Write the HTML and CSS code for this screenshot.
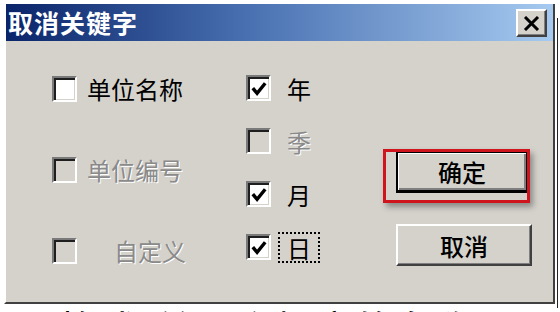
FILE: index.html
```html
<!DOCTYPE html>
<html lang="zh-CN">
<head>
<meta charset="utf-8">
<title>取消关键字</title>
<link rel="stylesheet" href="styles.css">
</head>
<body>
<div class="screen">
  <div class="dialog">
    <div class="titlebar">
      <span class="title">取消关键字</span>
      <span class="close">
        <svg width="17" height="15" viewBox="0 0 17 15"><path d="M2 1 L15 14 M15 1 L2 14" stroke="#000" stroke-width="3" fill="none"/></svg>
      </span>
    </div>
    <div class="content">
      <div class="col col1">
        <div class="opt"><span class="cb white"></span><span class="lbl">单位名称</span></div>
        <div class="opt disabled"><span class="cb"></span><span class="lbl">单位编号</span></div>
        <div class="opt disabled"><span class="cb"></span><span class="lbl indent">自定义</span></div>
      </div>
      <div class="col col2">
        <div class="opt"><span class="cb white"><svg width="21" height="22" viewBox="0 0 21 22"><path d="M4 10 L8.5 15.5 L17 5" stroke="#000" stroke-width="3.6" fill="none"/></svg></span><span class="lbl2">年</span></div>
        <div class="opt disabled"><span class="cb"></span><span class="lbl2">季</span></div>
        <div class="opt"><span class="cb white"><svg width="21" height="22" viewBox="0 0 21 22"><path d="M4 10 L8.5 15.5 L17 5" stroke="#000" stroke-width="3.6" fill="none"/></svg></span><span class="lbl2">月</span></div>
        <div class="opt"><span class="cb white"><svg width="21" height="22" viewBox="0 0 21 22"><path d="M4 10 L8.5 15.5 L17 5" stroke="#000" stroke-width="3.6" fill="none"/></svg></span><span class="lbl2 focus">日</span></div>
      </div>
      <div class="col col3">
        <div class="okwrap">
          <div class="btn default">确定</div>
          <div class="mark"></div>
        </div>
        <div class="btn">取消</div>
      </div>
    </div>
  </div>
  <div class="ruler"></div>
</div>
<div class="below">格式/单一个相应的名称</div>
</body>
</html>
```

FILE: styles.css
```css
html, body {
  margin: 0;
  padding: 0;
  background: #fff;
  width: 560px;
  height: 312px;
  overflow: hidden;
  font-family: "Noto Sans CJK SC", "Noto Sans", sans-serif;
}

.screen {
  display: flex;
  padding: 4px 0 0 4px;
}

.dialog {
  width: 551px;
  height: 300px;
  box-sizing: border-box;
  background: #d5d2cc;
  border-left: 2px solid #fff;
  border-right: 2px solid #404040;
  border-bottom: 2px solid #404040;
  display: flex;
  flex-direction: column;
}

.titlebar {
  height: 37px;
  flex: none;
  display: flex;
  align-items: center;
  justify-content: space-between;
  background: linear-gradient(to right, #0a246a 0%, #4a72b2 45%, #a6caf0 100%);
  padding: 0 6px 0 2px;
}

.title {
  color: #fff;
  font-size: 25px;
  font-weight: 700;
  letter-spacing: 1px;
  line-height: 37px;
}

.close {
  width: 31px;
  height: 28px;
  box-sizing: border-box;
  background: #d5d2cc;
  border-top: 2px solid #fff;
  border-left: 2px solid #fff;
  border-right: 2px solid #404040;
  border-bottom: 2px solid #404040;
  box-shadow: inset -1px -1px 0 #808080;
  display: flex;
  align-items: center;
  justify-content: center;
  margin-top: 1px;
}

.content {
  flex: 1;
  display: grid;
  grid-template-columns: 240px 150px auto;
}

.col {
  display: flex;
  flex-direction: column;
}

.col1 {
  padding: 35px 0 0 46px;
  gap: 55px;
}

.col2 {
  padding-top: 34px;
  gap: 27px;
}

.col3 {
  padding-top: 110px;
  gap: 31px;
}

.opt {
  height: 26px;
  display: flex;
  align-items: center;
  font-size: 24px;
  color: #000;
}

.cb {
  width: 25px;
  height: 26px;
  box-sizing: border-box;
  flex: none;
  border-top: 2px solid #7a7a7a;
  border-left: 2px solid #7a7a7a;
  border-right: 2px solid #fff;
  border-bottom: 2px solid #fff;
  box-shadow: inset 2px 2px 0 #1e1e1e, inset -1px -1px 0 #d5d2cc;
  background: #d5d2cc;
  display: flex;
  align-items: center;
  justify-content: center;
}

.cb.white {
  background: #fff;
}

.cb svg {
  display: block;
  margin: 1px 0 0 1px;
}

.lbl {
  margin-left: 10px;
  line-height: 30px;
}

.lbl.indent {
  margin-left: 37px;
}

.lbl2 {
  margin-left: 7px;
  padding: 0 8px;
  line-height: 27px;
  border: 1px dotted transparent;
}

.lbl2.focus {
  border: 2px dotted #000;
  padding: 0 7px;
}

.disabled .lbl,
.disabled .lbl2 {
  color: #8a8a8a;
  text-shadow: 1px 1px 0 #fff;
}

.okwrap {
  position: relative;
}

.btn {
  width: 136px;
  height: 42px;
  box-sizing: border-box;
  background: #d5d2cc;
  border-top: 2px solid #fff;
  border-left: 2px solid #fff;
  border-right: 2px solid #404040;
  border-bottom: 2px solid #404040;
  box-shadow: inset -1px -1px 0 #808080;
  display: flex;
  align-items: center;
  justify-content: center;
  font-size: 24px;
  font-weight: 500;
  color: #000;
}

.btn.default {
  width: 132px;
  border: 2px solid #000;
  border-bottom-width: 3px;
  box-shadow: inset 1px 1px 0 #fff, inset -2px -2px 0 #808080;
}

.mark {
  position: absolute;
  left: -13px;
  top: -2px;
  width: 147px;
  height: 54px;
  box-sizing: border-box;
  border: 3px solid #d0141e;
  box-shadow: 3px 4px 6px rgba(0, 0, 0, 0.35);
}

.ruler {
  width: 1px;
  margin: 14px 0 0 2px;
  height: 290px;
  background: #222;
}

.below {
  margin: -4px 0 0 58px;
  font-size: 40px;
  line-height: 48px;
  color: #000;
  white-space: nowrap;
}
```
